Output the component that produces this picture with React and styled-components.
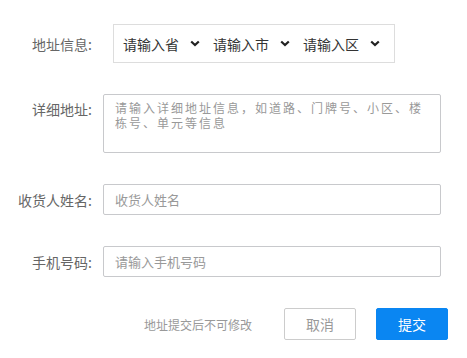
import React from "react";
import styled, { createGlobalStyle } from "styled-components";

const GlobalStyle = createGlobalStyle`
  body {
    margin: 0;
    background: #fff;
    font-family: "Noto Sans CJK SC", "Noto Sans", sans-serif;
  }
`;

const Form = styled.div`
  display: flex;
  flex-direction: column;
  gap: 31px;
  padding-top: 24px;
  width: 467px;
`;

const Row = styled.div`
  display: flex;
  align-items: ${(p) => (p.top ? "flex-start" : "center")};
`;

const Label = styled.label`
  width: 92px;
  margin-right: 11px;
  text-align: right;
  font-size: 14px;
  line-height: 20px;
  color: #666;
  white-space: nowrap;
  padding-top: ${(p) => (p.top ? "5px" : "0")};
`;

const SelectBox = styled.div`
  display: flex;
  align-items: center;
  box-sizing: border-box;
  height: 39px;
  width: 282px;
  margin-left: 10px;
  padding-left: 9px;
  border: 1px solid #ddd;
`;

const SelectItem = styled.div`
  display: flex;
  align-items: center;
  width: 90px;
  font-size: 14px;
  color: #333;
  line-height: 20px;
`;

const Chevron = styled.svg`
  margin-left: 11px;
  width: 10px;
  height: 7px;
`;

const TextArea = styled.textarea`
  box-sizing: border-box;
  width: 338px;
  height: 59px;
  padding: 6px 11px;
  border: 1px solid #c8c9cc;
  border-radius: 2px;
  resize: none;
  outline: none;
  font-family: inherit;
  font-size: 12px;
  letter-spacing: 2px;
  line-height: 14.5px;
  &::placeholder {
    color: #999;
  }
`;

const Input = styled.input`
  box-sizing: border-box;
  width: 338px;
  height: 31px;
  padding: 0 11px;
  border: 1px solid #c8c9cc;
  border-radius: 2px;
  outline: none;
  font-family: inherit;
  font-size: 13px;
  &::placeholder {
    color: #999;
  }
`;

const Footer = styled.div`
  display: flex;
  align-items: center;
  justify-content: flex-end;
  padding-right: 19px;
`;

const Hint = styled.span`
  font-size: 12px;
  color: #999;
  margin-right: 32px;
`;

const Button = styled.button`
  box-sizing: border-box;
  width: 72px;
  height: 32px;
  margin-left: ${(p) => (p.primary ? "20px" : "0")};
  border: 1px solid ${(p) => (p.primary ? "#0a86f2" : "#ccc")};
  border-radius: 2px;
  background: ${(p) => (p.primary ? "#0a86f2" : "#fff")};
  color: ${(p) => (p.primary ? "#fff" : "#999")};
  font-family: inherit;
  font-size: 14px;
  cursor: pointer;
`;

const ChevronIcon = () => (
  <Chevron viewBox="0 0 10 7">
    <path d="M1.2 1.5l3.8 3.6 3.8-3.6" fill="none" stroke="#222" strokeWidth="2.2" />
  </Chevron>
);

const regions = ["请输入省", "请输入市", "请输入区"];

export default function App() {
  return (
    <>
      <GlobalStyle />
      <Form>
        <Row>
          <Label>地址信息:</Label>
          <SelectBox>
            {regions.map((r) => (
              <SelectItem key={r}>
                {r}
                <ChevronIcon />
              </SelectItem>
            ))}
          </SelectBox>
        </Row>
        <Row top>
          <Label top>详细地址:</Label>
          <TextArea placeholder="请输入详细地址信息，如道路、门牌号、小区、楼栋号、单元等信息" />
        </Row>
        <Row>
          <Label>收货人姓名:</Label>
          <Input placeholder="收货人姓名" />
        </Row>
        <Row>
          <Label>手机号码:</Label>
          <Input placeholder="请输入手机号码" />
        </Row>
        <Footer>
          <Hint>地址提交后不可修改</Hint>
          <Button>取消</Button>
          <Button primary>提交</Button>
        </Footer>
      </Form>
    </>
  );
}
